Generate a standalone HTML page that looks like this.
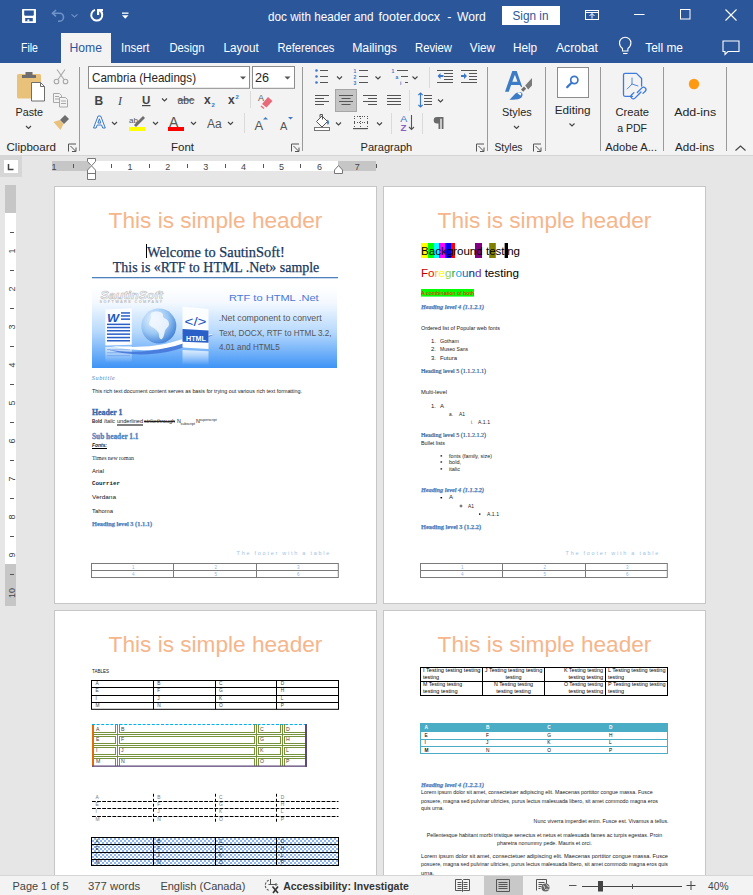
<!DOCTYPE html>
<html><head><meta charset="utf-8">
<style>
*{margin:0;padding:0;box-sizing:border-box}
html,body{width:753px;height:895px;overflow:hidden;background:#e6e6e6;font-family:"Liberation Sans",sans-serif;position:relative}
.a{position:absolute;white-space:nowrap}
svg text{white-space:pre}
</style></head><body>
<svg class="a" style="left:0;top:0" width="753" height="895" viewBox="0 0 753 895" font-family="Liberation Sans, sans-serif">
<defs>
<linearGradient id="gimg" x1="0" y1="0" x2="0" y2="1"><stop offset="0" stop-color="#ffffff"/><stop offset="0.2" stop-color="#f4f9ff"/><stop offset="0.55" stop-color="#b9dafd"/><stop offset="1" stop-color="#3e93f6"/></linearGradient>
<pattern id="chk" width="4" height="4" patternUnits="userSpaceOnUse"><rect width="4" height="4" fill="#fff"/><rect width="2" height="2" fill="#8db4ec"/><rect x="2" y="2" width="2" height="2" fill="#8db4ec"/></pattern>
</defs>
<g fill="#fff" stroke="#c6c6c6" stroke-width="1">
<rect x="54.5" y="186.5" width="322" height="417"/>
<rect x="383.5" y="186.5" width="322" height="417"/>
<rect x="54.5" y="610.5" width="322" height="417"/>
<rect x="383.5" y="610.5" width="322" height="417"/>
</g>
<text x="108.6" y="228.1" font-size="22.60" fill="#f5b68c" textLength="213.8" lengthAdjust="spacingAndGlyphs">This is simple header</text>
<text x="437.6" y="228.1" font-size="22.60" fill="#f5b68c" textLength="213.8" lengthAdjust="spacingAndGlyphs">This is simple header</text>
<text x="108.6" y="652.1" font-size="22.60" fill="#f5b68c" textLength="213.8" lengthAdjust="spacingAndGlyphs">This is simple header</text>
<text x="437.6" y="652.1" font-size="22.60" fill="#f5b68c" textLength="213.8" lengthAdjust="spacingAndGlyphs">This is simple header</text>
<text x="236.6" y="554.8" font-size="4.60" fill="#9dc3e6" textLength="94.4" lengthAdjust="spacingAndGlyphs" letter-spacing="1.5">The footer with a table</text>
<g fill="none" stroke="#7a7a7a" stroke-width="1"><rect x="91.5" y="563.5" width="246.8" height="14"/><path d="M91.5 570.5h246.8M173.5 563.5v14M256.5 563.5v14"/></g>
<text x="133.2" y="569.3" font-size="4.50" fill="#8ab4e6" text-anchor="middle">1</text>
<text x="215.7" y="569.3" font-size="4.50" fill="#8ab4e6" text-anchor="middle">2</text>
<text x="298.2" y="569.3" font-size="4.50" fill="#8ab4e6" text-anchor="middle">3</text>
<text x="133.2" y="576.2" font-size="4.50" fill="#8ab4e6" text-anchor="middle">4</text>
<text x="215.7" y="576.2" font-size="4.50" fill="#8ab4e6" text-anchor="middle">5</text>
<text x="298.2" y="576.2" font-size="4.50" fill="#8ab4e6" text-anchor="middle">6</text>
<text x="565.6" y="554.8" font-size="4.60" fill="#9dc3e6" textLength="94.4" lengthAdjust="spacingAndGlyphs" letter-spacing="1.5">The footer with a table</text>
<g fill="none" stroke="#7a7a7a" stroke-width="1"><rect x="420.5" y="563.5" width="246.8" height="14"/><path d="M420.5 570.5h246.8M502.5 563.5v14M585.5 563.5v14"/></g>
<text x="462.2" y="569.3" font-size="4.50" fill="#8ab4e6" text-anchor="middle">1</text>
<text x="544.7" y="569.3" font-size="4.50" fill="#8ab4e6" text-anchor="middle">2</text>
<text x="627.2" y="569.3" font-size="4.50" fill="#8ab4e6" text-anchor="middle">3</text>
<text x="462.2" y="576.2" font-size="4.50" fill="#8ab4e6" text-anchor="middle">4</text>
<text x="544.7" y="576.2" font-size="4.50" fill="#8ab4e6" text-anchor="middle">5</text>
<text x="627.2" y="576.2" font-size="4.50" fill="#8ab4e6" text-anchor="middle">6</text>
<rect x="146" y="244" width="1" height="14" fill="#000"/>
<text x="147.0" y="256.5" font-size="14.80" fill="#17365d" font-family="Liberation Serif, serif" textLength="137.8" lengthAdjust="spacingAndGlyphs" stroke="#17365d" stroke-width="0.25">Welcome to SautinSoft!</text>
<text x="112.8" y="271.8" font-size="14.80" fill="#17365d" font-family="Liberation Serif, serif" textLength="206.5" lengthAdjust="spacingAndGlyphs" stroke="#17365d" stroke-width="0.25">This is «RTF to HTML .Net» sample</text>
<rect x="92" y="277" width="246" height="1.3" fill="#4f81bd"/>
<rect x="92" y="286" width="245" height="82" fill="url(#gimg)"/>
<text x="100.5" y="298.5" font-size="11.50" fill="#f7f7f7" font-weight="bold" font-style="italic" textLength="62.5" lengthAdjust="spacingAndGlyphs" stroke="#b8b8b8" stroke-width="0.5">SautinSoft</text>
<text x="99.5" y="302.5" font-size="3.00" fill="#bbbbbb" font-weight="bold" textLength="64.0" lengthAdjust="spacingAndGlyphs" letter-spacing="1">SOFTWARE COMPANY</text>
<defs><radialGradient id="globe" cx="0.35" cy="0.3" r="0.75"><stop offset="0" stop-color="#eaf4fe"/><stop offset="0.55" stop-color="#9cc8f4"/><stop offset="1" stop-color="#3f7fd6"/></radialGradient><linearGradient id="refl" x1="0" y1="0" x2="0" y2="1"><stop offset="0" stop-color="#ffffff" stop-opacity="0.75"/><stop offset="1" stop-color="#ffffff" stop-opacity="0"/></linearGradient></defs>
<path d="M105.3 309.5l26.5-1.2v36.5l-26.5 0.8z" fill="#fbfdff"/>
<text x="107.0" y="322.0" font-size="11.50" fill="#2157c0" font-weight="bold" font-style="italic" textLength="12.0" lengthAdjust="spacingAndGlyphs">W</text>
<g fill="#2a5fc8"><rect x="121" y="312.2" width="9" height="1.5"/><rect x="121" y="315.2" width="9" height="1.5"/><rect x="121" y="318.4" width="9" height="1.5"/><rect x="107" y="323.6" width="23" height="1.5"/><rect x="107" y="326.8" width="23" height="1.5"/><rect x="107" y="330.0" width="23" height="1.5"/><rect x="107" y="333.4" width="23" height="1.5"/><rect x="107" y="336.8" width="23" height="1.5"/><rect x="107" y="340.0" width="23" height="1.5"/></g>
<path d="M105.3 347l26.5-0.8v16l-26.5 0.5z" fill="url(#refl)"/>
<g fill="#4a7fd8" opacity="0.35"><rect x="107" y="349.0" width="23" height="1.2"/><rect x="107" y="352.0" width="23" height="1.2"/><rect x="107" y="355.0" width="23" height="1.2"/></g>
<circle cx="158.8" cy="326" r="17.5" fill="url(#globe)"/>
<path d="M151 313c3-2 8-2 11 0 2 2 0 4 2 5 3 1 5 3 5 6 0 3-3 4-4 7-1 3-1 6-3 8-2 1-3-2-3-4 0-3-2-4-4-6-2-2-5-2-6-5 0-2 2-4 2-6 0-2-1-3 0-5z" fill="#f3f8fe" opacity="0.85"/>
<path d="M106 349c18 4 40 4 62 -2 18-5 32-11 47-13-12 6-28 14-48 18-22 4-44 3-61-3z" fill="#3f6fd6" opacity="0.8"/>
<path d="M112 346c22 2 45 1 64-5 14-4 26-7 39-7-13 3-26 8-40 12-22 6-45 5-63 0z" fill="#ffffff"/>
<path d="M182.5 306.4l26 2.6v40l-26-1.5z" fill="#fbfdff"/>
<text x="184.5" y="325.5" font-size="12.00" fill="#2157c0" textLength="22.0" lengthAdjust="spacingAndGlyphs">&lt;/></text>
<path d="M182.5 329l26 1.5v12.3l-26-1z" fill="#2a5fc8"/>
<text x="186.0" y="340.5" font-size="7.00" fill="#fff" font-weight="bold" textLength="20.0" lengthAdjust="spacingAndGlyphs">HTML</text>
<path d="M182.5 350l26 1.2v14l-26-1z" fill="url(#refl)"/>
<text x="229.0" y="300.5" font-size="9.80" fill="#4a78d6" textLength="89.7" lengthAdjust="spacingAndGlyphs">RTF to HTML .Net</text>
<text x="218.8" y="321.0" font-size="8.20" fill="#555" textLength="102.8" lengthAdjust="spacingAndGlyphs">.Net component to convert</text>
<text x="219.0" y="335.5" font-size="8.20" fill="#555" textLength="112.5" lengthAdjust="spacingAndGlyphs">Text, DOCX, RTF to HTML 3.2,</text>
<text x="219.0" y="350.0" font-size="8.20" fill="#555" textLength="60.7" lengthAdjust="spacingAndGlyphs">4.01 and HTML5</text>
<text x="91.8" y="380.0" font-size="5.80" fill="#4f81bd" font-family="Liberation Serif, serif" font-style="italic" textLength="23.5" lengthAdjust="spacingAndGlyphs" letter-spacing="0.5">Subtitle</text>
<text x="92.0" y="392.8" font-size="5.40" fill="#222" textLength="210.0" lengthAdjust="spacingAndGlyphs">This rich text document content serves as basis for trying out various rich text formatting.</text>
<text x="92.0" y="415.2" font-size="7.90" fill="#3a68a8" font-family="Liberation Serif, serif" font-weight="bold" textLength="30.5" lengthAdjust="spacingAndGlyphs" stroke="#3a68a8" stroke-width="0.35">Header 1</text>
<text x="92.0" y="423.2" font-size="5.40" fill="#222" font-weight="bold" textLength="10.0" lengthAdjust="spacingAndGlyphs">Bold</text>
<text x="104.0" y="423.2" font-size="5.40" fill="#222" font-style="italic" textLength="11.0" lengthAdjust="spacingAndGlyphs">Italic</text>
<text x="117.0" y="423.2" font-size="5.40" fill="#222" textLength="26.0" lengthAdjust="spacingAndGlyphs">underlined</text>
<rect x="117" y="424.5" width="26" height="1" fill="#000"/>
<text x="144.0" y="423.2" font-size="5.40" fill="#222" textLength="31.0" lengthAdjust="spacingAndGlyphs">strikethrough</text>
<rect x="144" y="421.2" width="31" height="0.8" fill="#000"/>
<text x="177.0" y="423.2" font-size="5.40" fill="#222">N</text>
<text x="180.6" y="424.5" font-size="3.60" fill="#222" textLength="14.5" lengthAdjust="spacingAndGlyphs">subscript</text>
<text x="196.0" y="423.2" font-size="5.40" fill="#222">N</text>
<text x="199.6" y="420.5" font-size="3.60" fill="#222" textLength="17.0" lengthAdjust="spacingAndGlyphs">superscript</text>
<text x="92.0" y="438.7" font-size="7.30" fill="#4f81bd" font-family="Liberation Serif, serif" font-weight="bold" textLength="46.5" lengthAdjust="spacingAndGlyphs" stroke="#4f81bd" stroke-width="0.30">Sub header 1.1</text>
<text x="92.0" y="447.0" font-size="5.40" fill="#222" font-weight="bold" font-style="italic" textLength="15.0" lengthAdjust="spacingAndGlyphs">Fonts:</text>
<rect x="92" y="448" width="15" height="1" fill="#000"/>
<text x="92.0" y="460.0" font-size="5.40" fill="#222" font-family="Liberation Serif, serif" textLength="42.0" lengthAdjust="spacingAndGlyphs">Times new roman</text>
<text x="92.0" y="472.5" font-size="5.40" fill="#222" textLength="12.0" lengthAdjust="spacingAndGlyphs">Arial</text>
<text x="92.0" y="485.0" font-size="5.40" fill="#222" font-family="Liberation Mono, monospace" font-weight="bold" textLength="28.0" lengthAdjust="spacingAndGlyphs">Courrier</text>
<text x="92.0" y="498.8" font-size="5.40" fill="#222" textLength="24.0" lengthAdjust="spacingAndGlyphs">Verdana</text>
<text x="92.0" y="512.6" font-size="5.40" fill="#222" textLength="21.0" lengthAdjust="spacingAndGlyphs">Tahoma</text>
<text x="92.0" y="526.0" font-size="5.60" fill="#4f81bd" font-family="Liberation Serif, serif" font-weight="bold" textLength="60.0" lengthAdjust="spacingAndGlyphs" stroke="#4f81bd" stroke-width="0.25">Heading level 3 (1.1.1)</text>
<rect x="421.0" y="243" width="7.0" height="15" fill="#ffff00"/>
<rect x="428.0" y="243" width="6.0" height="15" fill="#00ff00"/>
<rect x="434.0" y="243" width="5.0" height="15" fill="#00ffff"/>
<rect x="439.0" y="243" width="6.0" height="15" fill="#ff00ff"/>
<rect x="445.0" y="243" width="6.0" height="15" fill="#0000ff"/>
<rect x="451.0" y="243" width="4.0" height="15" fill="#ff0000"/>
<rect x="475.0" y="243" width="7.0" height="15" fill="#800080"/>
<rect x="489.2" y="243" width="6.6" height="15" fill="#808000"/>
<rect x="504.8" y="243" width="3.1" height="15" fill="#000000"/>
<text x="421.0" y="254.9" font-size="11.50" fill="#000" textLength="99.0" lengthAdjust="spacingAndGlyphs">Background testing</text>
<rect x="504.8" y="243" width="3.1" height="15" fill="#000"/>
<text x="421" y="277.3" font-size="11.5" textLength="98" lengthAdjust="spacingAndGlyphs"><tspan fill="#c00000">F</tspan><tspan fill="#ff0000">o</tspan><tspan fill="#ffc000">r</tspan><tspan fill="#ffff00">e</tspan><tspan fill="#92d050">g</tspan><tspan fill="#00b050">r</tspan><tspan fill="#00b0f0">o</tspan><tspan fill="#0070c0">u</tspan><tspan fill="#002060">n</tspan><tspan fill="#7030a0">d</tspan><tspan fill="#000"> testing</tspan></text>
<rect x="421" y="289" width="53" height="7.6" fill="#00ff00"/>
<text x="421.0" y="294.5" font-size="5.40" fill="#ff0000" textLength="53.0" lengthAdjust="spacingAndGlyphs">A combination of both</text>
<text x="421.0" y="308.7" font-size="5.60" fill="#4f81bd" font-family="Liberation Serif, serif" font-weight="bold" font-style="italic" textLength="63.0" lengthAdjust="spacingAndGlyphs" stroke="#4f81bd" stroke-width="0.25">Heading level 4 (1.1.2.1)</text>
<text x="421.0" y="330.0" font-size="5.40" fill="#222" textLength="79.0" lengthAdjust="spacingAndGlyphs">Ordered list of Popular web fonts</text>
<text x="431.0" y="342.5" font-size="5.40" fill="#222" textLength="5.0" lengthAdjust="spacingAndGlyphs">1.</text>
<text x="440.0" y="342.5" font-size="5.40" fill="#222" textLength="19.0" lengthAdjust="spacingAndGlyphs">Gotham</text>
<text x="431.0" y="350.7" font-size="5.40" fill="#222" textLength="5.0" lengthAdjust="spacingAndGlyphs">2.</text>
<text x="440.0" y="350.7" font-size="5.40" fill="#222" textLength="28.0" lengthAdjust="spacingAndGlyphs">Museo Sans</text>
<text x="431.0" y="359.8" font-size="5.40" fill="#222" textLength="5.0" lengthAdjust="spacingAndGlyphs">3.</text>
<text x="440.0" y="359.8" font-size="5.40" fill="#222" textLength="17.0" lengthAdjust="spacingAndGlyphs">Futura</text>
<text x="421.0" y="373.1" font-size="5.60" fill="#365f91" font-family="Liberation Serif, serif" textLength="65.0" lengthAdjust="spacingAndGlyphs" stroke="#365f91" stroke-width="0.20">Heading level 5 (1.1.2.1.1)</text>
<text x="421.0" y="394.0" font-size="5.40" fill="#222" textLength="26.0" lengthAdjust="spacingAndGlyphs">Multi-level</text>
<text x="431.0" y="407.8" font-size="5.40" fill="#222" textLength="5.0" lengthAdjust="spacingAndGlyphs">1.</text>
<text x="440.0" y="407.8" font-size="5.40" fill="#222" textLength="4.0" lengthAdjust="spacingAndGlyphs">A</text>
<text x="449.0" y="415.7" font-size="5.40" fill="#222" textLength="4.0" lengthAdjust="spacingAndGlyphs">a.</text>
<text x="459.0" y="415.7" font-size="5.40" fill="#222" textLength="6.0" lengthAdjust="spacingAndGlyphs">A1</text>
<text x="471.0" y="423.8" font-size="5.40" fill="#222" textLength="2.0" lengthAdjust="spacingAndGlyphs">i.</text>
<text x="478.0" y="423.8" font-size="5.40" fill="#222" textLength="12.0" lengthAdjust="spacingAndGlyphs">A.1.1</text>
<text x="421.0" y="436.8" font-size="5.60" fill="#365f91" font-family="Liberation Serif, serif" textLength="65.0" lengthAdjust="spacingAndGlyphs" stroke="#365f91" stroke-width="0.20">Heading level 5 (1.1.2.1.2)</text>
<text x="421.0" y="444.6" font-size="5.40" fill="#222" textLength="24.0" lengthAdjust="spacingAndGlyphs">Bullet lists</text>
<rect x="440.5" y="455.3" width="1.6" height="1.2" fill="#000"/>
<text x="449.0" y="457.5" font-size="5.40" fill="#222" textLength="43.0" lengthAdjust="spacingAndGlyphs">fonts (family, size)</text>
<rect x="440.5" y="461.4" width="1.6" height="1.2" fill="#000"/>
<text x="449.0" y="463.6" font-size="5.40" fill="#222" textLength="12.0" lengthAdjust="spacingAndGlyphs">bold,</text>
<rect x="440.5" y="468.3" width="1.6" height="1.2" fill="#000"/>
<text x="449.0" y="470.5" font-size="5.40" fill="#222" textLength="11.0" lengthAdjust="spacingAndGlyphs">italic</text>
<text x="421.0" y="491.7" font-size="5.60" fill="#4f81bd" font-family="Liberation Serif, serif" font-weight="bold" font-style="italic" textLength="63.0" lengthAdjust="spacingAndGlyphs" stroke="#4f81bd" stroke-width="0.25">Heading level 4 (1.1.2.2)</text>
<rect x="440.5" y="497" width="1.6" height="1.4" fill="#000"/>
<text x="449.0" y="499.2" font-size="5.40" fill="#222" textLength="4.0" lengthAdjust="spacingAndGlyphs">A</text>
<circle cx="461" cy="506" r="1" fill="none" stroke="#000" stroke-width="0.6"/>
<text x="468.0" y="507.5" font-size="5.40" fill="#222" textLength="6.0" lengthAdjust="spacingAndGlyphs">A1</text>
<rect x="479" y="513.4" width="1.4" height="1.4" fill="#000"/>
<text x="487.0" y="515.6" font-size="5.40" fill="#222" textLength="12.0" lengthAdjust="spacingAndGlyphs">A.1.1</text>
<text x="421.0" y="529.4" font-size="5.60" fill="#4f81bd" font-family="Liberation Serif, serif" font-weight="bold" textLength="60.0" lengthAdjust="spacingAndGlyphs" stroke="#4f81bd" stroke-width="0.25">Heading level 3 (1.2.2)</text>
<text x="92.0" y="672.8" font-size="5.20" fill="#111" textLength="17.0" lengthAdjust="spacingAndGlyphs">TABLES</text>
<g fill="none" stroke="#000" stroke-width="1"><rect x="91.5" y="680.5" width="247" height="28.8"/><path d="M91.5 687.5h247M91.5 695.5h247M91.5 702.5h247M153.5 680.5v28.8M215.5 680.5v28.8M276.5 680.5v28.8"/></g>
<text x="95.4" y="685.2" font-size="4.80" fill="#444">A</text>
<text x="157.2" y="685.2" font-size="4.80" fill="#444">B</text>
<text x="219.0" y="685.2" font-size="4.80" fill="#444">C</text>
<text x="280.8" y="685.2" font-size="4.80" fill="#444">D</text>
<text x="95.4" y="691.6" font-size="4.80" fill="#444">E</text>
<text x="157.2" y="691.6" font-size="4.80" fill="#444">F</text>
<text x="219.0" y="691.6" font-size="4.80" fill="#444">G</text>
<text x="280.8" y="691.6" font-size="4.80" fill="#444">H</text>
<text x="95.4" y="699.6" font-size="4.80" fill="#444">I</text>
<text x="157.2" y="699.6" font-size="4.80" fill="#444">J</text>
<text x="219.0" y="699.6" font-size="4.80" fill="#444">K</text>
<text x="280.8" y="699.6" font-size="4.80" fill="#444">L</text>
<text x="95.4" y="706.8" font-size="4.80" fill="#444">M</text>
<text x="157.2" y="706.8" font-size="4.80" fill="#444">N</text>
<text x="219.0" y="706.8" font-size="4.80" fill="#444">O</text>
<text x="280.8" y="706.8" font-size="4.80" fill="#444">P</text>
<path d="M115.5 724V733M94 732.5H116M115.5 736V744M94 736.5H116M94 743.5H116M115.5 747V755M94 747.5H116M94 754.5H116M115.5 758V766M94 758.5H116M119.5 724V733M254.5 724V733M119 732.5H255M119.5 736V744M254.5 736V744M119 736.5H255M119 743.5H255M119.5 747V755M254.5 747V755M119 747.5H255M119 754.5H255M119.5 758V766M254.5 758V766M119 758.5H255M258.5 724V733M280.5 724V733M258 732.5H281M258.5 736V744M280.5 736V744M258 736.5H281M258 743.5H281M258.5 747V755M280.5 747V755M258 747.5H281M258 754.5H281M258.5 758V766M280.5 758V766M258 758.5H281M284.5 724V733M284 732.5H305M284.5 736V744M284 736.5H305M284 743.5H305M284.5 747V755M284 747.5H305M284 754.5H305M284.5 758V766M284 758.5H305M117.5 724V766M256.5 724V766M282.5 724V766M94 734.5H305M94 745.5H305M94 756.5H305" fill="none" stroke="#76923c" stroke-width="1"/>
<path d="M92 724.5h215" stroke="#00b0f0" stroke-width="1" stroke-dasharray="3 1.6"/>
<rect x="92" y="725" width="2" height="41.5" fill="#e36c09"/>
<rect x="92" y="765.5" width="215" height="1.3" fill="#5f497a"/>
<rect x="305" y="724" width="2" height="42.8" fill="#5f497a"/>
<text x="96.0" y="730.5" font-size="5.20" fill="#444">A</text>
<text x="121.0" y="730.5" font-size="5.20" fill="#444">B</text>
<text x="260.0" y="730.5" font-size="5.20" fill="#444">C</text>
<text x="286.0" y="730.5" font-size="5.20" fill="#444">D</text>
<text x="96.0" y="741.0" font-size="5.20" fill="#444">E</text>
<text x="121.0" y="741.0" font-size="5.20" fill="#444">F</text>
<text x="260.0" y="741.0" font-size="5.20" fill="#444">G</text>
<text x="286.0" y="741.0" font-size="5.20" fill="#444">H</text>
<text x="96.0" y="752.0" font-size="5.20" fill="#444">I</text>
<text x="121.0" y="752.0" font-size="5.20" fill="#444">J</text>
<text x="260.0" y="752.0" font-size="5.20" fill="#444">K</text>
<text x="286.0" y="752.0" font-size="5.20" fill="#444">L</text>
<text x="96.0" y="762.7" font-size="5.20" fill="#444">M</text>
<text x="121.0" y="762.7" font-size="5.20" fill="#444">N</text>
<text x="260.0" y="762.7" font-size="5.20" fill="#444">O</text>
<text x="286.0" y="762.7" font-size="5.20" fill="#444">P</text>
<g fill="none" stroke="#000" stroke-width="1"><path d="M92 801.5h246.5M92 808.5h246.5M92 816.5h246.5" stroke-dasharray="3.8 1.3"/><path d="M153.5 793.8v28.5M215.5 793.8v28.5M276.5 793.8v28.5" stroke-dasharray="2.9 2.1"/></g>
<text x="95.4" y="798.8" font-size="4.90" fill="#777">A</text>
<text x="157.2" y="798.8" font-size="4.90" fill="#777">B</text>
<text x="219.0" y="798.8" font-size="4.90" fill="#777">C</text>
<text x="280.8" y="798.8" font-size="4.90" fill="#777">D</text>
<text x="95.4" y="806.0" font-size="4.90" fill="#777">E</text>
<text x="157.2" y="806.0" font-size="4.90" fill="#777">F</text>
<text x="219.0" y="806.0" font-size="4.90" fill="#777">G</text>
<text x="280.8" y="806.0" font-size="4.90" fill="#777">H</text>
<text x="95.4" y="812.7" font-size="4.90" fill="#777">I</text>
<text x="157.2" y="812.7" font-size="4.90" fill="#777">J</text>
<text x="219.0" y="812.7" font-size="4.90" fill="#777">K</text>
<text x="280.8" y="812.7" font-size="4.90" fill="#777">L</text>
<text x="95.4" y="820.7" font-size="4.90" fill="#777">M</text>
<text x="157.2" y="820.7" font-size="4.90" fill="#777">N</text>
<text x="219.0" y="820.7" font-size="4.90" fill="#777">O</text>
<text x="280.8" y="820.7" font-size="4.90" fill="#777">P</text>
<rect x="91.5" y="837.5" width="247" height="28" fill="url(#chk)"/>
<g fill="none" stroke="#000" stroke-width="1"><rect x="91.5" y="837.5" width="247" height="28"/><path d="M91.5 844.5h247M91.5 852.5h247M91.5 859.5h247M153.5 837.5v28M215.5 837.5v28M276.5 837.5v28"/></g>
<text x="95.4" y="842.5" font-size="4.90" fill="#333">A</text>
<text x="157.2" y="842.5" font-size="4.90" fill="#333">B</text>
<text x="219.0" y="842.5" font-size="4.90" fill="#333">C</text>
<text x="280.8" y="842.5" font-size="4.90" fill="#333">D</text>
<text x="95.4" y="849.8" font-size="4.90" fill="#333">E</text>
<text x="157.2" y="849.8" font-size="4.90" fill="#333">F</text>
<text x="219.0" y="849.8" font-size="4.90" fill="#333">G</text>
<text x="280.8" y="849.8" font-size="4.90" fill="#333">H</text>
<text x="95.4" y="857.3" font-size="4.90" fill="#333">I</text>
<text x="157.2" y="857.3" font-size="4.90" fill="#333">J</text>
<text x="219.0" y="857.3" font-size="4.90" fill="#333">K</text>
<text x="280.8" y="857.3" font-size="4.90" fill="#333">L</text>
<text x="95.4" y="864.0" font-size="4.90" fill="#333">M</text>
<text x="157.2" y="864.0" font-size="4.90" fill="#333">N</text>
<text x="219.0" y="864.0" font-size="4.90" fill="#333">O</text>
<text x="280.8" y="864.0" font-size="4.90" fill="#333">P</text>
<g fill="none" stroke="#000" stroke-width="1"><rect x="420.5" y="667.5" width="247" height="28"/><path d="M420.5 681.5h247M482.5 667.5v28M544.5 667.5v28M605.5 667.5v28"/></g>
<text x="423.0" y="672.0" font-size="5.40" fill="#000" textLength="57.5" lengthAdjust="spacingAndGlyphs">I Testing testing testing</text>
<text x="423.0" y="678.6" font-size="5.40" fill="#000" textLength="16.1" lengthAdjust="spacingAndGlyphs">testing</text>
<text x="513.5" y="672.0" font-size="5.40" fill="#000" text-anchor="middle" textLength="57.5" lengthAdjust="spacingAndGlyphs">J Testing testing testing</text>
<text x="513.5" y="678.6" font-size="5.40" fill="#000" text-anchor="middle" textLength="16.1" lengthAdjust="spacingAndGlyphs">testing</text>
<text x="603.0" y="672.0" font-size="5.40" fill="#000" text-anchor="end" textLength="39.1" lengthAdjust="spacingAndGlyphs">K Testing testing</text>
<text x="603.0" y="678.6" font-size="5.40" fill="#000" text-anchor="end" textLength="34.5" lengthAdjust="spacingAndGlyphs">testing testing</text>
<text x="608.0" y="672.0" font-size="5.40" fill="#000" textLength="57.5" lengthAdjust="spacingAndGlyphs">L Testing testing testing</text>
<text x="608.0" y="678.6" font-size="5.40" fill="#000" textLength="16.1" lengthAdjust="spacingAndGlyphs">testing</text>
<text x="423.0" y="686.0" font-size="5.40" fill="#000" textLength="39.1" lengthAdjust="spacingAndGlyphs">M Testing testing</text>
<text x="423.0" y="692.6" font-size="5.40" fill="#000" textLength="34.5" lengthAdjust="spacingAndGlyphs">testing testing</text>
<text x="513.5" y="686.0" font-size="5.40" fill="#000" text-anchor="middle" textLength="39.1" lengthAdjust="spacingAndGlyphs">N Testing testing</text>
<text x="513.5" y="692.6" font-size="5.40" fill="#000" text-anchor="middle" textLength="34.5" lengthAdjust="spacingAndGlyphs">testing testing</text>
<text x="603.0" y="686.0" font-size="5.40" fill="#000" text-anchor="end" textLength="39.1" lengthAdjust="spacingAndGlyphs">O Testing testing</text>
<text x="603.0" y="692.6" font-size="5.40" fill="#000" text-anchor="end" textLength="34.5" lengthAdjust="spacingAndGlyphs">testing testing</text>
<text x="608.0" y="686.0" font-size="5.40" fill="#000" textLength="57.5" lengthAdjust="spacingAndGlyphs">P Testing testing testing</text>
<text x="608.0" y="692.6" font-size="5.40" fill="#000" textLength="16.1" lengthAdjust="spacingAndGlyphs">testing</text>
<rect x="420.5" y="723" width="247" height="8.7" fill="#4bacc6"/>
<g fill="none" stroke="#4bacc6" stroke-width="1"><rect x="420.5" y="723.5" width="247" height="30"/><path d="M420.5 731.5h247M420.5 739.5h247M420.5 746.5h247"/></g>
<text x="424.5" y="728.5" font-size="4.80" fill="#fff" font-weight="bold">A</text>
<text x="486.0" y="728.5" font-size="4.80" fill="#fff" font-weight="bold">B</text>
<text x="547.3" y="728.5" font-size="4.80" fill="#fff" font-weight="bold">C</text>
<text x="609.0" y="728.5" font-size="4.80" fill="#fff" font-weight="bold">D</text>
<text x="424.5" y="736.6" font-size="4.80" fill="#000">E</text>
<text x="486.0" y="736.6" font-size="4.80" fill="#000">F</text>
<text x="547.3" y="736.6" font-size="4.80" fill="#000">G</text>
<text x="609.0" y="736.6" font-size="4.80" fill="#000">H</text>
<text x="424.5" y="743.7" font-size="4.80" fill="#000">I</text>
<text x="486.0" y="743.7" font-size="4.80" fill="#000">J</text>
<text x="547.3" y="743.7" font-size="4.80" fill="#000">K</text>
<text x="609.0" y="743.7" font-size="4.80" fill="#000">L</text>
<text x="424.5" y="751.6" font-size="4.80" fill="#222" font-weight="bold">M</text>
<text x="486.0" y="751.6" font-size="4.80" fill="#000">N</text>
<text x="547.3" y="751.6" font-size="4.80" fill="#000">O</text>
<text x="609.0" y="751.6" font-size="4.80" fill="#000">P</text>
<text x="421.0" y="787.1" font-size="5.60" fill="#4f81bd" font-family="Liberation Serif, serif" font-weight="bold" font-style="italic" textLength="63.0" lengthAdjust="spacingAndGlyphs" stroke="#4f81bd" stroke-width="0.25">Heading level 4 (1.2.2.1)</text>
<text x="421.0" y="794.3" font-size="5.40" fill="#222" textLength="231.6" lengthAdjust="spacingAndGlyphs">Lorem ipsum dolor sit amet, consectetuer adipiscing elit. Maecenas porttitor congue massa. Fusce</text>
<text x="421.0" y="802.6" font-size="5.40" fill="#222" textLength="237.0" lengthAdjust="spacingAndGlyphs">posuere, magna sed pulvinar ultricies, purus lectus malesuada libero, sit amet commodo magna eros</text>
<text x="421.0" y="810.4" font-size="5.40" fill="#222" textLength="23.0" lengthAdjust="spacingAndGlyphs">quis urna.</text>
<text x="668.6" y="823.0" font-size="5.40" fill="#222" text-anchor="end" textLength="135.0" lengthAdjust="spacingAndGlyphs">Nunc viverra imperdiet enim. Fusce est. Vivamus a tellus.</text>
<text x="544.5" y="837.4" font-size="5.40" fill="#222" text-anchor="middle" textLength="235.5" lengthAdjust="spacingAndGlyphs">Pellentesque habitant morbi tristique senectus et netus et malesuada fames ac turpis egestas. Proin</text>
<text x="544.5" y="845.4" font-size="5.40" fill="#222" text-anchor="middle" textLength="94.8" lengthAdjust="spacingAndGlyphs">pharetra nonummy pede. Mauris et orci.</text>
<text x="421.0" y="858.1" font-size="5.40" fill="#222" textLength="247.0" lengthAdjust="spacingAndGlyphs">Lorem ipsum dolor sit amet, consectetuer adipiscing elit. Maecenas porttitor congue massa. Fusce</text>
<text x="421.0" y="866.4" font-size="5.40" fill="#222" textLength="247.0" lengthAdjust="spacingAndGlyphs">posuere, magna sed pulvinar ultricies, purus lectus malesuada libero, sit amet commodo magna eros quis</text>
<text x="421.0" y="874.5" font-size="5.40" fill="#222" textLength="13.0" lengthAdjust="spacingAndGlyphs">urna.</text>
</svg><svg class="a" style="left:0;top:0" width="753" height="895" viewBox="0 0 753 895" font-family="Liberation Sans, sans-serif">
<!-- title bar -->
<rect x="0" y="0" width="753" height="63" fill="#2b579a"/>
<rect x="22" y="9" width="14" height="14" rx="0.8" fill="#fff"/>
<path d="M24.2 10.6h9.6v4.4l-0.8 0.8h-8l-0.8-0.8z" fill="#2b579a"/>
<path d="M25.2 18h7.6v3.3h-7.6z" fill="#2b579a"/>
<rect x="27.4" y="19.4" width="1.9" height="2" fill="#fff"/>
<g fill="none" stroke="#6f93c8" stroke-width="1.6">
  <path d="M53 13.2h6.5a4 4 0 0 1 0 8h-1.5"/>
  <path d="M56 10l-3.5 3.2 3.5 3.2"/>
  <path d="M71.5 14.3l3 2.7 3-2.7" stroke-width="1.1"/>
</g>
<g fill="none" stroke="#fff" stroke-width="2">
  <path d="M95 9.9a5.5 5.5 0 1 0 4.6 0.5"/>
</g>
<path d="M97 9h6v2.2h-3.8v3.8H97z" fill="#fff"/>
<rect x="122" y="12.5" width="6.5" height="1.3" fill="#fff"/>
<path d="M122 15.2h6.5l-3.25 3.6z" fill="#fff"/>
<g fill="#fff" font-size="12.5">
<text x="268" y="21" textLength="105.5" lengthAdjust="spacingAndGlyphs">doc with header and</text>
<text x="378.6" y="21" textLength="61.4" lengthAdjust="spacingAndGlyphs">footer.docx</text>
<text x="447.2" y="21">-</text>
<text x="457" y="21" textLength="28.7" lengthAdjust="spacingAndGlyphs">Word</text>
</g>
<rect x="502" y="6" width="58" height="19" fill="#fff"/>
<text x="512.5" y="20" fill="#2b579a" font-size="12.5" textLength="36" lengthAdjust="spacingAndGlyphs">Sign in</text>
<g fill="none" stroke="#fff" stroke-width="1">
  <rect x="585.5" y="10.5" width="13" height="9"/>
  <path d="M585.5 12.5h13"/>
  <path d="M592 18.5v-5M589.5 16l2.5-2.5 2.5 2.5"/>
  <path d="M634 14.5h10.5"/>
  <rect x="680.5" y="9.5" width="9.5" height="9.5"/>
  <path d="M725.5 9.5l11 11M736.5 9.5l-11 11" stroke-width="1.1"/>
</g>
<!-- tabs -->
<rect x="61" y="33" width="50" height="31" fill="#f3f3f3"/>
<g font-size="12.5" fill="#fff">
  <text x="21" y="52" textLength="17" lengthAdjust="spacingAndGlyphs">File</text>
  <text x="69.5" y="52" fill="#2b579a" textLength="32.5" lengthAdjust="spacingAndGlyphs">Home</text>
  <text x="121" y="52" textLength="28.5" lengthAdjust="spacingAndGlyphs">Insert</text>
  <text x="169.5" y="52" textLength="35" lengthAdjust="spacingAndGlyphs">Design</text>
  <text x="223.5" y="52" textLength="35.3" lengthAdjust="spacingAndGlyphs">Layout</text>
  <text x="277.4" y="52" textLength="57" lengthAdjust="spacingAndGlyphs">References</text>
  <text x="352.2" y="52" textLength="44.8" lengthAdjust="spacingAndGlyphs">Mailings</text>
  <text x="415" y="52" textLength="37" lengthAdjust="spacingAndGlyphs">Review</text>
  <text x="469.8" y="52" textLength="25.2" lengthAdjust="spacingAndGlyphs">View</text>
  <text x="512.9" y="52" textLength="24.3" lengthAdjust="spacingAndGlyphs">Help</text>
  <text x="555.9" y="52" textLength="42.1" lengthAdjust="spacingAndGlyphs">Acrobat</text>
  <text x="645.2" y="52" textLength="37.8" lengthAdjust="spacingAndGlyphs">Tell me</text>
</g>
<g fill="none" stroke="#fff" stroke-width="1.1">
  <path d="M622.5 51v-2.5c-2-1.5-3-3.3-3-5.5a5.7 5.7 0 0 1 11.4 0c0 2.2-1 4-3 5.5V51z"/>
  <path d="M623 53.5h4.5"/>
  <path d="M723 41h16v10.5h-11l-3 3v-3h-2z"/>
</g>
<!-- ribbon -->
<rect x="0" y="63" width="753" height="92" fill="#f3f3f3"/>
<rect x="0" y="155" width="753" height="1" fill="#d5d5d5"/>
<g fill="#9a9a9a">
  <rect x="79" y="67" width="1" height="84"/>
  <rect x="302" y="67" width="1" height="84"/>
  <rect x="487" y="67" width="1" height="84"/>
  <rect x="545" y="67" width="1" height="84"/>
  <rect x="600" y="67" width="1" height="84"/>
  <rect x="663" y="67" width="1" height="84"/>
  <rect x="726" y="67" width="1" height="84"/>
</g>
<g fill="#dadada">
  <rect x="250" y="91" width="1" height="17"/>
  <rect x="244" y="113" width="1" height="20"/>
  <rect x="429" y="67" width="1" height="21"/>
  <rect x="409" y="90" width="1" height="21"/>
  <rect x="391" y="113" width="1" height="21"/>
  <rect x="422" y="113" width="1" height="21"/>
</g>
<g font-size="11.5" fill="#262626">
  <text x="6.5" y="151" textLength="49.5" lengthAdjust="spacingAndGlyphs">Clipboard</text>
  <text x="171" y="151" textLength="23" lengthAdjust="spacingAndGlyphs">Font</text>
  <text x="360.5" y="151" textLength="51.7" lengthAdjust="spacingAndGlyphs">Paragraph</text>
  <text x="494.5" y="151" textLength="28" lengthAdjust="spacingAndGlyphs">Styles</text>
  <text x="605.3" y="150.5" textLength="51.7" lengthAdjust="spacingAndGlyphs">Adobe A...</text>
  <text x="675" y="150.5" textLength="39.3" lengthAdjust="spacingAndGlyphs">Add-ins</text>
  <text x="15.5" y="115.5" textLength="27.5" lengthAdjust="spacingAndGlyphs">Paste</text>
  <text x="502" y="115.5" textLength="29.7" lengthAdjust="spacingAndGlyphs">Styles</text>
  <text x="554.7" y="114" textLength="35.9" lengthAdjust="spacingAndGlyphs">Editing</text>
  <text x="615.4" y="116" textLength="33.6" lengthAdjust="spacingAndGlyphs">Create</text>
  <text x="617.2" y="131.5" textLength="29.8" lengthAdjust="spacingAndGlyphs">a PDF</text>
  <text x="674.2" y="115.7" textLength="42" lengthAdjust="spacingAndGlyphs">Add-ins</text>
</g>
<!-- launchers -->
<g fill="none" stroke="#555" stroke-width="1">
  <path d="M68.5 151.5v-7.5h7.5M70.5 146l5 5M72 151.5h4v-4"/>
  <path d="M291.5 151.5v-7.5h7.5M293.5 146l5 5M295 151.5h4v-4"/>
  <path d="M476.5 151.5v-7.5h7.5M478.5 146l5 5M480 151.5h4v-4"/>
  <path d="M533.5 151.5v-7.5h7.5M535.5 146l5 5M537 151.5h4v-4"/>
</g>
<g fill="none" stroke="#444" stroke-width="1.1">
  <path d="M26 126l2.5 2.5 2.5-2.5"/>
  <path d="M514 126l2.5 2.5 2.5-2.5"/>
  <path d="M569.5 123.5l2.5 2.5 2.5-2.5"/>
  <path d="M735.5 150.5l5-4.5 5 4.5"/>
</g>
<!-- paste -->
<rect x="17" y="74" width="24" height="24.5" rx="1.5" fill="#e8c17a"/>
<path d="M22 78h14v-3h-3.5v-3h-7v3H22z" fill="#6e6e6e"/>
<path d="M31.5 82.5h9l4 4v14.5h-13z" fill="#fff" stroke="#6e6e6e" stroke-width="1"/>
<path d="M40.5 82.5v4h4" fill="none" stroke="#6e6e6e" stroke-width="1"/>
<!-- cut -->
<g fill="none" stroke="#a8a8a8" stroke-width="1.1">
  <circle cx="56.5" cy="81.5" r="2.3"/>
  <circle cx="65.5" cy="81.5" r="2.3"/>
  <path d="M58 79.5l7-10M64 79.5l-7-10"/>
</g>
<!-- copy -->
<g fill="#f3f3f3" stroke="#a8a8a8" stroke-width="1">
  <path d="M53.5 93.5h6l2 2v7h-8z"/>
  <path d="M59.5 97.5h6l2 2v7.5h-8z"/>
  <path d="M55 96.5h4M55 99h4M61 101h5M61 103.5h5" />
</g>
<!-- format painter -->
<path d="M53.5 122l6-2 4 4-3 6z" fill="#e8c17a"/>
<path d="M60 120l4 4 5-5-4-4z" fill="#6e6e6e"/>
<!-- font boxes -->
<rect x="88.5" y="66.5" width="161" height="21.8" fill="#fff" stroke="#8c8c8c"/>
<rect x="252.5" y="66.5" width="42" height="21.8" fill="#fff" stroke="#8c8c8c"/>
<text x="92" y="82.3" font-size="12.6" fill="#262626" textLength="104" lengthAdjust="spacingAndGlyphs">Cambria (Headings)</text>
<text x="255" y="82.3" font-size="12.6" fill="#262626">26</text>
<path d="M240 76.5h6l-3 3z M284.5 76.5h6l-3 3z" fill="#555"/>
<!-- B I U abc -->
<g fill="#444">
  <text x="94.5" y="104.5" font-size="12" font-weight="bold">B</text>
  <text x="118" y="104.5" font-size="12" font-style="italic" font-family="Liberation Serif, serif">I</text>
  <text x="142" y="103.5" font-size="11.5" font-weight="bold">U</text>
  <rect x="142" y="105" width="8.5" height="1.2"/>
  <text x="177.5" y="104" font-size="11.5" textLength="16.5" lengthAdjust="spacingAndGlyphs">abc</text>
  <rect x="177.5" y="99.5" width="17" height="1"/>
  <text x="204" y="104" font-size="12" font-weight="bold">x</text>
  <text x="228" y="104" font-size="12" font-weight="bold">x</text>
</g>
<text x="211.5" y="106.5" font-size="6" fill="#3c78c8" font-weight="bold">2</text>
<text x="235.5" y="99" font-size="6" fill="#3c78c8" font-weight="bold">2</text>
<g fill="none" stroke="#444" stroke-width="1.1">
  <path d="M162 98.5l2.5 2.5 2.5-2.5"/>
  <path d="M112 122l2.5 2.5 2.5-2.5"/>
  <path d="M153 122l2.5 2.5 2.5-2.5"/>
  <path d="M191 122l2.5 2.5 2.5-2.5"/>
  <path d="M228 122l2.5 2.5 2.5-2.5"/>
  <path d="M337 76.5l2.5 2.5 2.5-2.5"/>
  <path d="M375.5 76.5l2.5 2.5 2.5-2.5"/>
  <path d="M412.5 76.5l2.5 2.5 2.5-2.5"/>
  <path d="M438 99.5l2.5 2.5 2.5-2.5"/>
  <path d="M336 122.5l2.5 2.5 2.5-2.5"/>
  <path d="M377 122.5l2.5 2.5 2.5-2.5"/>
</g>
<!-- eraser -->
<text x="258" y="101" font-size="9" fill="#555">A</text>
<path d="M262 104l6-7 4.5 4-6 6.5z" fill="#e86a7a"/>
<path d="M261 106l3 2.5" stroke="#e86a7a" stroke-width="1.5"/>
<!-- text effects A -->
<path d="M93.5 128l4.6-12h2.6l4.6 12h-2.6l-1.1-3h-4.4l-1.1 3z M97.9 123h2.9l-1.45-4.2z" fill="#f4f8fd" fill-rule="evenodd" stroke="#3c78c8" stroke-width="1" stroke-linejoin="round"/>
<!-- highlight -->
<text x="129" y="123" font-size="8" fill="#555">ab</text>
<path d="M134 125l9-9 2 2-9 9z" fill="#6e6e6e"/>
<rect x="129" y="127" width="16" height="4" fill="#ffff00"/>
<!-- font color -->
<text x="169" y="126.5" font-size="14" fill="#555">A</text>
<rect x="168" y="127" width="16" height="4" fill="#ff0000"/>
<text x="207" y="127.5" font-size="12" fill="#555">Aa</text>
<text x="254.5" y="129.5" font-size="13" fill="#555">A</text>
<path d="M263 119.5l2.5-2.5 2.5 2.5z" fill="#3c78c8"/>
<text x="280" y="129.5" font-size="11" fill="#555">A</text>
<path d="M288 117l2.5 2.5 2.5-2.5z" fill="#3c78c8"/>
<!-- paragraph icons -->
<g fill="#3c78c8">
  <circle cx="316.5" cy="70.5" r="1.3"/><circle cx="316.5" cy="76.5" r="1.3"/><circle cx="316.5" cy="82.5" r="1.3"/>
  <text x="353.5" y="72.8" font-size="5" font-weight="bold">1</text>
  <text x="353.5" y="78.8" font-size="5" font-weight="bold">2</text>
  <text x="353.5" y="84.8" font-size="5" font-weight="bold">3</text>
  <text x="391.5" y="72.8" font-size="5" font-weight="bold">1</text>
  <text x="395.5" y="78.8" font-size="5" font-weight="bold">a</text>
  <text x="400" y="84.8" font-size="5" font-weight="bold">i</text>
</g>
<g fill="#555">
  <rect x="320" y="70" width="8" height="1"/><rect x="320" y="76" width="8" height="1"/><rect x="320" y="82" width="8" height="1"/>
  <rect x="359" y="70" width="9" height="1"/><rect x="359" y="76" width="9" height="1"/><rect x="359" y="82" width="9" height="1"/>
  <rect x="397" y="70" width="11" height="1"/><rect x="401" y="76" width="7" height="1"/><rect x="405" y="82" width="3" height="1"/>
</g>
<!-- indent -->
<g fill="#555">
  <rect x="437" y="70" width="16" height="1"/><rect x="444" y="73" width="9" height="1"/><rect x="444" y="76" width="9" height="1"/><rect x="444" y="79" width="9" height="1"/><rect x="437" y="82" width="16" height="1"/>
  <rect x="461" y="70" width="16" height="1"/><rect x="469" y="73" width="8" height="1"/><rect x="469" y="76" width="8" height="1"/><rect x="469" y="79" width="8" height="1"/><rect x="461" y="82" width="16" height="1"/>
</g>
<path d="M437.5 76l3-3v2h3v2h-3v2z" fill="#3c78c8"/>
<path d="M467 76l-3-3v2h-3v2h3v2z" fill="#3c78c8"/>
<!-- align -->
<rect x="335.5" y="89.5" width="21" height="22" fill="#c5c5c5" stroke="#a6a6a6"/>
<g fill="#555">
  <rect x="315" y="95" width="14" height="1"/><rect x="315" y="98" width="9" height="1"/><rect x="315" y="101" width="14" height="1"/><rect x="315" y="104" width="9" height="1"/>
  <rect x="339" y="95" width="14" height="1"/><rect x="341.5" y="98" width="9" height="1"/><rect x="339" y="101" width="14" height="1"/><rect x="341.5" y="104" width="9" height="1"/>
  <rect x="363" y="95" width="14" height="1"/><rect x="368" y="98" width="9" height="1"/><rect x="363" y="101" width="14" height="1"/><rect x="368" y="104" width="9" height="1"/>
  <rect x="387" y="95" width="14" height="1"/><rect x="387" y="98" width="14" height="1"/><rect x="387" y="101" width="14" height="1"/><rect x="387" y="104" width="14" height="1"/>
  <rect x="424" y="95" width="8" height="1"/><rect x="424" y="98" width="8" height="1"/><rect x="424" y="101" width="8" height="1"/><rect x="424" y="104" width="8" height="1"/>
</g>
<g fill="none" stroke="#3c78c8" stroke-width="1.2">
  <path d="M420.5 93v14M418.3 95.2l2.2-2.2 2.2 2.2M418.3 104.8l2.2 2.2 2.2-2.2"/>
</g>
<!-- shading -->
<path d="M316.5 121.5l5.5-5.5 5.5 5.5-5.5 5.5z" fill="#fff" stroke="#555" stroke-width="1"/>
<path d="M320 117.5v-3h2.5v5" fill="none" stroke="#555" stroke-width="1"/>
<path d="M327.5 119.5c2 1.5 2 4 0.3 5.5l-1-3z" fill="#3c78c8"/>
<rect x="314.5" y="127.5" width="15" height="3" fill="#fff" stroke="#777" stroke-width="1"/>
<!-- borders -->
<g fill="#555"><rect x="367.0" y="116.0" width="1" height="1"/><rect x="367.0" y="122.0" width="1" height="1"/><rect x="367.0" y="122.0" width="1" height="1"/><rect x="360.0" y="126.0" width="1" height="1"/><rect x="367.0" y="128.0" width="1" height="1"/><rect x="354.0" y="126.0" width="1" height="1"/><rect x="364.0" y="116.0" width="1" height="1"/><rect x="367.0" y="118.0" width="1" height="1"/><rect x="362.0" y="116.0" width="1" height="1"/><rect x="362.0" y="122.0" width="1" height="1"/><rect x="364.0" y="122.0" width="1" height="1"/><rect x="362.0" y="122.0" width="1" height="1"/><rect x="364.0" y="122.0" width="1" height="1"/><rect x="367.0" y="126.0" width="1" height="1"/><rect x="360.0" y="123.0" width="1" height="1"/><rect x="357.0" y="116.0" width="1" height="1"/><rect x="354.0" y="123.0" width="1" height="1"/><rect x="357.0" y="122.0" width="1" height="1"/><rect x="357.0" y="122.0" width="1" height="1"/><rect x="359.0" y="116.0" width="1" height="1"/><rect x="359.0" y="122.0" width="1" height="1"/><rect x="360.0" y="121.0" width="1" height="1"/><rect x="359.0" y="122.0" width="1" height="1"/><rect x="367.0" y="123.0" width="1" height="1"/><rect x="354.0" y="121.0" width="1" height="1"/><rect x="360.0" y="116.0" width="1" height="1"/><rect x="367.0" y="121.0" width="1" height="1"/><rect x="354.0" y="116.0" width="1" height="1"/><rect x="354.0" y="122.0" width="1" height="1"/><rect x="354.0" y="122.0" width="1" height="1"/><rect x="360.0" y="128.0" width="1" height="1"/><rect x="354.0" y="128.0" width="1" height="1"/><rect x="360.0" y="118.0" width="1" height="1"/><rect x="354.0" y="118.0" width="1" height="1"/></g>
<rect x="353" y="128" width="14.5" height="1.2" fill="#555"/>
<!-- sort -->
<text x="400.3" y="122.3" font-size="9.5" fill="#3c78c8" textLength="7" lengthAdjust="spacingAndGlyphs">A</text>
<text x="400.5" y="130.5" font-size="9.5" fill="#8b5fbf" font-weight="bold" textLength="6" lengthAdjust="spacingAndGlyphs">Z</text>
<path d="M411.5 115v14.5M409 127l2.5 2.5 2.5-2.5" fill="none" stroke="#555" stroke-width="1.1"/>
<path d="M443.5 117h-6.5a3.3 3.3 0 0 0 0 6.6h1.5v5.4h1.8v-10.3h1.4v10.3h1.8z" fill="#6a6a6a"/>
<!-- styles -->
<path d="M505 91.8L512.3 71h4.4l5.4 15.5-0.8 0.8-1.6-2.4h-8.6l-2.3 6.9z M512.3 81.8h5.2l-2.6-7z" fill="#3d7bc6" fill-rule="evenodd"/>
<path d="M521 89.5l3-3 2.2 2.2-3 3z" fill="#6e6e6e"/>
<path d="M525.2 85.5l6.8-7.5v7.6l-3.8 3.8z" fill="#7a7a7a"/>
<path d="M509.5 99.8l6-6.2c2-2 5.2-2.2 6.5-0.6 1.2 1.6 0.5 4.2-2 5.6-2.5 1.2-6 1.2-10.5 1.2z" fill="#3d7bc6"/>
<path d="M517 92.8c1.5-0.8 3.2-0.6 4 0.4 0.5 0.7 0.3 1.8-0.5 2.2-1.2-0.6-2.3-1.6-3.5-2.6z" fill="#fff"/>
<!-- editing -->
<rect x="557.5" y="67.5" width="31" height="30" fill="#fff" stroke="#8c8c8c"/>
<circle cx="574.3" cy="80" r="3.6" fill="none" stroke="#3c78c8" stroke-width="1.7"/>
<path d="M571.6 82.7l-4.4 4.4" stroke="#3c78c8" stroke-width="2.2" stroke-linecap="round"/>
<!-- pdf -->
<g fill="none" stroke="#3d7bde" stroke-width="1.3" stroke-linecap="round" stroke-linejoin="round">
  <path d="M632.5 96.3h-7.5a1.5 1.5 0 0 1-1.5-1.5v-19.9a1.5 1.5 0 0 1 1.5-1.5h11.5l5.1 5.1v7.5"/>
  <path d="M632 78v6l-4.8 5M632 84l6 2" stroke-width="0.9"/>
  <path d="M637.3 92.5l4.6-4.6a2.3 2.3 0 0 1 3.3 3.3l-2.2 2.2M639.6 93.5l-4.6 4.6a2.3 2.3 0 0 1-3.3-3.3l2.2-2.2M638.5 94.5l2.5-2.5"/>
</g>
<!-- add-ins -->
<circle cx="694" cy="84" r="5.2" fill="#ff9912"/>
<!-- ruler -->
<rect x="0" y="156" width="22" height="21" fill="#d6d6d6"/><rect x="4" y="160" width="14" height="13" fill="#fff"/>
<path d="M8.5 164v5.5h5" fill="none" stroke="#444" stroke-width="1.5"/>
<rect x="52" y="161" width="38" height="10" fill="#c6c6c6"/><rect x="90" y="161" width="248" height="10" fill="#fff"/><rect x="338" y="161" width="38" height="10" fill="#c6c6c6"/>
<g font-size="9" fill="#444" text-anchor="middle">
<text x="54" y="169.5">1</text>
<text x="129.9" y="169.5">1</text>
<text x="167.8" y="169.5">2</text>
<text x="205.7" y="169.5">3</text>
<text x="243.6" y="169.5">4</text>
<text x="281.5" y="169.5">5</text>
<text x="319.4" y="169.5">6</text>
<text x="357.3" y="169.5">7</text>
</g>
<g fill="#555">
<rect x="73.0" y="164" width="1" height="4"/>
<rect x="111.0" y="164" width="1" height="4"/>
<rect x="149.0" y="164" width="1" height="4"/>
<rect x="187.0" y="164" width="1" height="4"/>
<rect x="225.0" y="164" width="1" height="4"/>
<rect x="263.0" y="164" width="1" height="4"/>
<rect x="300.0" y="164" width="1" height="4"/>
<rect x="376.0" y="164" width="1" height="4"/>
</g>
<path d="M87.5 158.5h8v3l-4 4.3-4-4.3z" fill="#fff" stroke="#777" stroke-width="1"/>
<path d="M91.5 165.8l4 4.3v9.4h-8v-9.4z" fill="#fff" stroke="#777" stroke-width="1"/><path d="M87.5 173.5h8" stroke="#777" stroke-width="1"/>
<path d="M338.5 165.5l4 4.5v3.5h-8v-3.5z" fill="#fff" stroke="#777" stroke-width="1"/>
<rect x="5" y="185" width="11" height="28" fill="#c6c6c6"/><rect x="5" y="213" width="11" height="351" fill="#fff"/><rect x="5" y="564" width="11" height="42" fill="#c6c6c6"/>
<g font-size="9" fill="#444" text-anchor="middle">
<text transform="translate(14.5 251.0) rotate(-90)">1</text>
<text transform="translate(14.5 289.0) rotate(-90)">2</text>
<text transform="translate(14.5 327.0) rotate(-90)">3</text>
<text transform="translate(14.5 365.0) rotate(-90)">4</text>
<text transform="translate(14.5 403.0) rotate(-90)">5</text>
<text transform="translate(14.5 441.0) rotate(-90)">6</text>
<text transform="translate(14.5 479.0) rotate(-90)">7</text>
<text transform="translate(14.5 517.0) rotate(-90)">8</text>
<text transform="translate(14.5 555.0) rotate(-90)">9</text>
<text transform="translate(14.5 593.0) rotate(-90)">10</text>
</g>
<g fill="#555">
<rect x="10" y="232" width="4" height="1"/>
<rect x="10" y="270" width="4" height="1"/>
<rect x="10" y="308" width="4" height="1"/>
<rect x="10" y="346" width="4" height="1"/>
<rect x="10" y="384" width="4" height="1"/>
<rect x="10" y="422" width="4" height="1"/>
<rect x="10" y="460" width="4" height="1"/>
<rect x="10" y="498" width="4" height="1"/>
<rect x="10" y="536" width="4" height="1"/>
<rect x="10" y="574" width="4" height="1"/>
</g>
<!-- status -->
<rect x="0" y="875" width="753" height="20" fill="#f3f3f3"/><rect x="0" y="875" width="753" height="1" fill="#d6d6d6"/>
<rect x="484" y="876" width="39" height="19" fill="#c8c8c8"/>
<g font-size="11.5" fill="#444">
<text x="12.5" y="890" textLength="56" lengthAdjust="spacingAndGlyphs">Page 1 of 5</text>
<text x="88" y="890" textLength="52.2" lengthAdjust="spacingAndGlyphs">377 words</text>
<text x="160.4" y="890" textLength="85" lengthAdjust="spacingAndGlyphs">English (Canada)</text>
<text x="283.2" y="890" font-weight="bold" fill="#333" textLength="125.6" lengthAdjust="spacingAndGlyphs">Accessibility: Investigate</text>
<text x="708" y="890" textLength="20.5" lengthAdjust="spacingAndGlyphs">40%</text>
</g>
<g fill="none" stroke="#555" stroke-width="1">
<path d="M268.8 880.3a5.3 5.3 0 0 0 0.8 10.2" stroke-dasharray="2.2 1.3" stroke-width="1.1"/>
<path d="M270.5 879v5.5M268.5 884.5h8M275.5 883l1.5 1.5-1.5 1.5" stroke-width="1"/>
<path d="M272.5 886.5l5.5 6.5M278 886.5l-5 6.5" stroke-width="1.6" stroke="#333"/>
<path d="M455.5 879.5h6l1 1 1-1h6v11h-6l-1 1-1-1h-6z M462.5 880.5v11"/>
<path d="M457.5 882.5h4M457.5 884.5h4M457.5 886.5h4M457.5 888.5h4M463.5 882.5h4M463.5 884.5h4M463.5 886.5h4M463.5 888.5h4"/>
<path d="M496.5 879.5h13v12h-13z"/>
<path d="M498.5 882.5h9M498.5 884.5h9M498.5 886.5h9M498.5 888.5h9"/>
<path d="M536.5 890.5v-11h10v4.5 M538.5 882.5h6M538.5 884.5h4M538.5 886.5h3M538.5 888.5h2"/>
<circle cx="545.5" cy="887.5" r="4" fill="#666" stroke="none"/>
<path d="M543 885.5c1 0.5 2 1.5 1.5 3M546.5 884.5c0.5 1.5 2 2 2.5 2.5M545 890c1-1 2.5-1 3.5-0.5" stroke="#f3f3f3" stroke-width="0.9"/>
<path d="M569 885.5h7.5"/>
<path d="M582 886.5h100" stroke="#444"/>
<path d="M632.5 884v5"/>
<path d="M686.5 885.5h9M691 881v9" stroke="#444"/>
</g>
<rect x="598" y="881" width="5" height="10.5" fill="#444"/></svg>
</body></html>
